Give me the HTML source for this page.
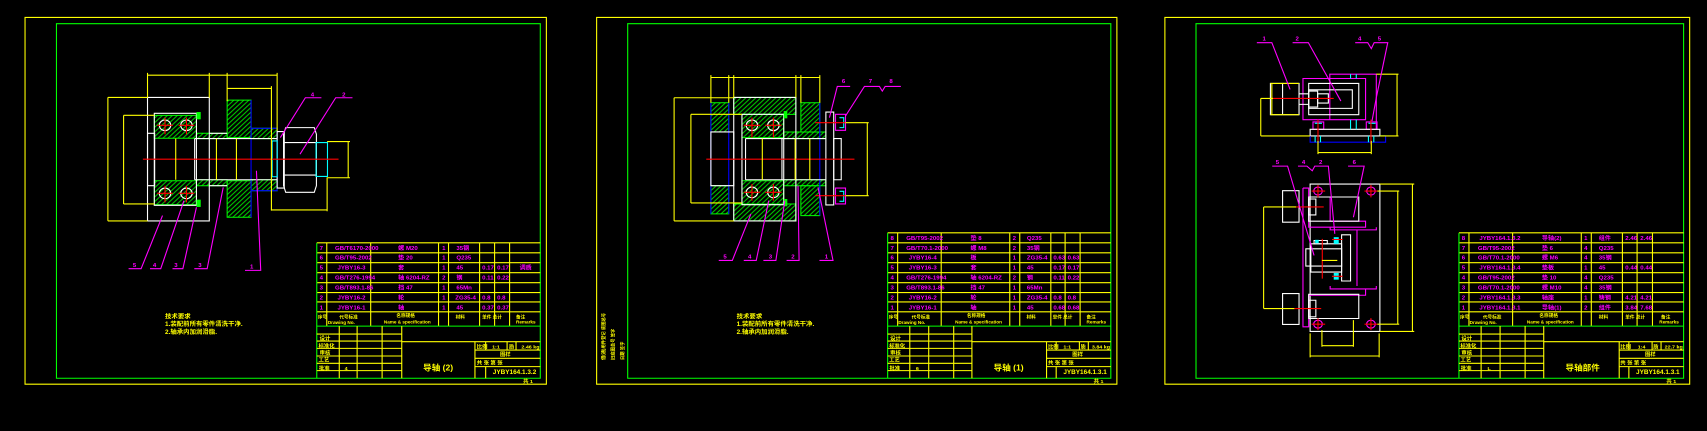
<!DOCTYPE html>
<html><head><meta charset="utf-8"><style>
html,body{margin:0;padding:0;background:#000;width:1707px;height:431px;overflow:hidden}
svg{display:block}
text{font-family:"Liberation Sans","Noto Sans CJK SC",sans-serif;font-weight:bold}
.y{stroke:#ffff00;fill:none}.g{stroke:#00ff00;fill:none}.w{stroke:#fff;fill:none}.m{stroke:#ff00ff;fill:none}.r{stroke:#ff0000;fill:none}.c{stroke:#00ffff;fill:none}.b{stroke:#0000ff;fill:none}
.y,.g,.w,.m,.r,.c,.b{stroke-width:1.1;vector-effect:non-scaling-stroke}
.h{fill:url(#hatch);stroke:#00ff00;stroke-width:1;vector-effect:non-scaling-stroke}
.tm{fill:#ff00ff;font-size:17px}.ty{fill:#ffff00;font-size:17px}
</style></head><body>
<svg width="1707" height="431" viewBox="0 0 1568 396" preserveAspectRatio="none" xmlns="http://www.w3.org/2000/svg">
<defs>
<pattern id="hatch" patternUnits="userSpaceOnUse" width="14" height="14"><path d="M0 14L14 0M-2 2L2 -2M12 16L16 12" stroke="#00cc00" stroke-width="3"/></pattern>
</defs>
<rect width="1568" height="396" fill="#000"/>

<!-- PANEL 1 -->
<g transform="translate(0.04,1.36) scale(0.328,0.305)">
<rect class="y" x="70" y="48" width="1460" height="1105"/>
<rect class="g" x="158" y="67" width="1355" height="1068"/>
<!-- table -->
<path class="y" d="M887 727H1513M887 757H1513M887 787H1513M887 817H1513M887 847H1513M887 877H1513M887 905H1513M887 935H1513M915 727V978M1038 727V978M1228 727V978M1256 727V978M1343 727V978M1385 727V978M1427 727V978"/>
<path class="g" d="M887 978H1513M887 727V1135"/>
<path class="y" d="M887 1002H1125M887 1023H1125M887 1045H1125M887 1068H1125M887 1090H1125M887 1112H1125M950 978V1135M1000 978V1135M1070 978V1135M1125 978V1135M1125 1025H1513M1330 1050H1513M1330 1075H1513M1330 1100H1513M1330 1025V1135M1360 1025V1050M1420 1025V1050M1445 1025V1050M1360 1100V1135"/>
<g class="tm"><text x="895" y="748">7</text><text x="938" y="748">GB/T6170-2000</text><text x="1115" y="748">螺 M20</text><text x="1238" y="748">1</text><text x="1278" y="748">35钢</text>
<text x="895" y="778">6</text><text x="938" y="778">GB/T95-2002</text><text x="1115" y="778">垫 20</text><text x="1238" y="778">1</text><text x="1278" y="778">Q235</text>
<text x="895" y="808">5</text><text x="945" y="808">JYBY16-3</text><text x="1115" y="808">套</text><text x="1238" y="808">1</text><text x="1278" y="808">45</text><text x="1350" y="808">0.17</text><text x="1392" y="808">0.17</text><text x="1455" y="808">调质</text>
<text x="895" y="838">4</text><text x="938" y="838">GB/T276-1994</text><text x="1115" y="838">轴 6204-RZ</text><text x="1238" y="838">2</text><text x="1278" y="838">钢</text><text x="1350" y="838">0.11</text><text x="1392" y="838">0.22</text>
<text x="895" y="868">3</text><text x="938" y="868">GB/T893.1-86</text><text x="1115" y="868">挡 47</text><text x="1238" y="868">1</text><text x="1278" y="868">65Mn</text>
<text x="895" y="898">2</text><text x="945" y="898">JYBY16-2</text><text x="1115" y="898">轮</text><text x="1238" y="898">1</text><text x="1275" y="898">ZG35-4</text><text x="1350" y="898">0.8</text><text x="1392" y="898">0.8</text>
<text x="895" y="928">1</text><text x="945" y="928">JYBY16-1</text><text x="1115" y="928">轴</text><text x="1238" y="928">1</text><text x="1278" y="928">45</text><text x="1350" y="928">0.37</text><text x="1392" y="928">0.37</text></g>
<g class="ty" style="font-size:13px"><text x="890" y="955">序号</text><text x="950" y="955">代号标准</text><text x="1110" y="950">名称规格</text><text x="1075" y="970">Name &amp; specification</text><text x="918" y="972">Drawing No.</text><text x="1276" y="955">材料</text><text x="1350" y="955">单件 总计</text><text x="1445" y="955">备注</text><text x="1445" y="970">Remarks</text></g>
<g class="ty" style="font-size:15px"><text x="895" y="1020">设计</text><text x="892" y="1042">标准化</text><text x="895" y="1063">审核</text><text x="892" y="1085">工艺</text><text x="893" y="1110">批准</text><text x="965" y="1110">4</text>
<text x="1335" y="1045">比例</text><text x="1378" y="1045">1:1</text><text x="1425" y="1045">质</text><text x="1460" y="1045">2.46 kg</text><text x="1400" y="1068">图样</text><text x="1335" y="1093">共 张 第 张</text>
<text x="1380" y="1122" style="font-size:18px">JYBY164.1.3.2</text><text x="1465" y="1150">共 1</text></g>
<text class="ty" x="1185" y="1112" style="font-size:24px">导轴 (2)</text>
<g class="ty" style="font-size:18px"><text x="462" y="955">技术要求</text><text x="462" y="978">1.装配前所有零件清洗干净.</text><text x="462" y="1002">2.轴承内加润滑脂.</text></g>
<!-- drawing -->
<rect class="h" x="636" y="297" width="67" height="113"/><rect class="h" x="636" y="540" width="67" height="110"/>
<rect class="h" x="703" y="382" width="73" height="31"/><rect class="h" x="703" y="537" width="73" height="33"/>
<rect class="h" x="550" y="397" width="86" height="16"/><rect class="h" x="550" y="537" width="86" height="18"/>
<rect class="h" x="432" y="343" width="118" height="69"/><rect class="h" x="432" y="540" width="118" height="72"/>
<path class="b" d="M703 297V650M703 382H776V570H703"/>
<rect class="w" x="413" y="289" width="173" height="372"/>
<rect class="w" x="432" y="337" width="118" height="277"/>
<rect class="w" x="413" y="397" width="20" height="158"/>
<path class="w" d="M545 413H776M545 537H776M545 413V537M586 397H636M586 555H636"/>
<circle class="w" cx="462" cy="373" r="16"/><circle class="w" cx="522" cy="373" r="16"/><circle class="w" cx="462" cy="578" r="16"/><circle class="w" cx="522" cy="578" r="16"/>
<rect x="550" y="333" width="12" height="22" fill="#00ff00"/><rect x="550" y="597" width="12" height="22" fill="#00ff00"/>
<rect class="w" x="776" y="392" width="20" height="170"/>
<path class="w" d="M800 380H880L886 400V555L880 575H800L794 555V400ZM797 425H885M797 523H885"/>
<rect class="c" x="885" y="425" width="32" height="102"/><rect class="c" x="762" y="420" width="14" height="108"/>
<path class="r" d="M400 475H948M462 350V400M440 373H484M522 350V400M500 373H544M462 555V605M440 578H484M522 555V605M500 578H544"/>
<path class="y" d="M413 222H776M413 215V290M586 215V290M636 215V300M776 215V390M636 262H760M760 255V630M302 289H413M302 661H413M302 289V661M346 343H432M346 610H432M346 343V610M975 422V531M916 422H980M916 531H980M760 628H916M916 530V632M492 413V537M606 413V537M662 413V537"/>
<path class="m" d="M360 805H395L455 645M420 805H450L515 600M483 805H512L550 620M544 805H580L625 560M686 810H730L718 510M785 410L855 290H900M840 460L940 290H987"/>
<g class="tm"><text x="372" y="800">5</text><text x="428" y="800">4</text><text x="488" y="800">3</text><text x="555" y="800">3</text><text x="700" y="805">1</text><text x="870" y="287">4</text><text x="958" y="287">2</text></g>
</g>

<!-- PANEL 2 -->
<g transform="translate(532.3,1.36) scale(0.328,0.305)">
<rect class="y" x="48" y="48" width="1457" height="1105"/>
<rect class="g" x="135" y="67" width="1353" height="1068"/>
<path class="y" d="M863 697H1488M863 727H1488M863 757H1488M863 787H1488M863 817H1488M863 847H1488M863 877H1488M863 905H1488M863 935H1488M891 697V978M1013 697V978M1205 697V978M1233 697V978M1320 697V978M1360 697V978M1402 697V978"/>
<path class="g" d="M863 978H1488M863 697V1135"/>
<path class="y" d="M863 1002H1099M863 1023H1099M863 1045H1099M863 1068H1099M863 1090H1099M863 1112H1099M925 978V1135M978 978V1135M1048 978V1135M1099 978V1135M1099 1025H1488M1308 1050H1488M1308 1075H1488M1308 1100H1488M1308 1025V1135M1335 1025V1050M1400 1025V1050M1425 1025V1050M1335 1100V1135"/>
<g class="tm"><text x="871" y="718">8</text><text x="915" y="718">GB/T95-2002</text><text x="1095" y="718">垫 8</text><text x="1213" y="718">2</text><text x="1253" y="718">Q235</text>
<text x="871" y="748">7</text><text x="915" y="748">GB/T70.1-2000</text><text x="1095" y="748">螺 M8</text><text x="1213" y="748">2</text><text x="1253" y="748">35钢</text>
<text x="871" y="778">6</text><text x="922" y="778">JYBY16-4</text><text x="1095" y="778">板</text><text x="1213" y="778">1</text><text x="1253" y="778">ZG35-4</text><text x="1327" y="778">0.63</text><text x="1367" y="778">0.63</text>
<text x="871" y="808">5</text><text x="922" y="808">JYBY16-3</text><text x="1095" y="808">套</text><text x="1213" y="808">1</text><text x="1253" y="808">45</text><text x="1327" y="808">0.17</text><text x="1367" y="808">0.17</text>
<text x="871" y="838">4</text><text x="915" y="838">GB/T276-1994</text><text x="1095" y="838">轴 6204-RZ</text><text x="1213" y="838">2</text><text x="1253" y="838">钢</text><text x="1327" y="838">0.11</text><text x="1367" y="838">0.22</text>
<text x="871" y="868">3</text><text x="915" y="868">GB/T893.1-86</text><text x="1095" y="868">挡 47</text><text x="1213" y="868">1</text><text x="1253" y="868">65Mn</text>
<text x="871" y="898">2</text><text x="922" y="898">JYBY16-2</text><text x="1095" y="898">轮</text><text x="1213" y="898">1</text><text x="1253" y="898">ZG35-4</text><text x="1327" y="898">0.8</text><text x="1367" y="898">0.8</text>
<text x="871" y="928">1</text><text x="922" y="928">JYBY16-1</text><text x="1095" y="928">轴</text><text x="1213" y="928">1</text><text x="1253" y="928">45</text><text x="1327" y="928">0.68</text><text x="1367" y="928">0.68</text></g>
<g class="ty" style="font-size:13px"><text x="866" y="955">序号</text><text x="930" y="955">代号标准</text><text x="1085" y="950">名称规格</text><text x="1052" y="970">Name &amp; specification</text><text x="893" y="972">Drawing No.</text><text x="1252" y="955">材料</text><text x="1325" y="955">单件 总计</text><text x="1420" y="955">备注</text><text x="1420" y="970">Remarks</text></g>
<g class="ty" style="font-size:15px"><text x="870" y="1020">设计</text><text x="867" y="1042">标准化</text><text x="870" y="1063">审核</text><text x="867" y="1085">工艺</text><text x="868" y="1110">批准</text><text x="942" y="1110">6</text>
<text x="1312" y="1045">比例</text><text x="1355" y="1045">1:1</text><text x="1403" y="1045">质</text><text x="1435" y="1045">3.84 kg</text><text x="1380" y="1068">图样</text><text x="1312" y="1093">共 张 第 张</text>
<text x="1355" y="1122" style="font-size:18px">JYBY164.1.3.1</text><text x="1440" y="1150">共 1</text></g>
<text class="ty" x="1160" y="1112" style="font-size:24px">导轴 (1)</text>
<g class="ty" style="font-size:18px"><text x="440" y="955">技术要求</text><text x="440" y="978">1.装配前所有零件清洗干净.</text><text x="440" y="1002">2.轴承内加润滑脂.</text></g>
<g class="ty" style="font-size:13px"><text transform="translate(72,1080) rotate(-90)">借(通)用件登记 底图总号</text><text transform="translate(98,1080) rotate(-90)">旧底图总号 签字</text><text transform="translate(124,1080) rotate(-90)">日期 签字</text></g>
<!-- drawing -->
<rect class="h" x="368" y="305" width="50" height="88"/><rect class="h" x="368" y="555" width="50" height="85"/>
<rect class="h" x="432" y="289" width="174" height="51"/><rect class="h" x="432" y="610" width="174" height="51"/>
<rect class="h" x="455" y="340" width="117" height="70"/><rect class="h" x="455" y="540" width="117" height="72"/>
<rect class="h" x="572" y="393" width="118" height="20"/><rect class="h" x="572" y="537" width="118" height="18"/>
<rect class="h" x="620" y="305" width="53" height="88"/><rect class="h" x="620" y="555" width="53" height="90"/>
<path class="b" d="M368 305V640M418 305V640M673 305V645"/>
<rect class="w" x="432" y="289" width="174" height="372"/>
<rect class="w" x="368" y="393" width="64" height="162"/>
<rect class="w" x="455" y="340" width="117" height="272"/>
<path class="w" d="M465 413H690M465 537H690M465 413V537M567 413V537"/>
<circle class="w" cx="483" cy="373" r="16"/><circle class="w" cx="543" cy="373" r="16"/><circle class="w" cx="483" cy="575" r="16"/><circle class="w" cx="543" cy="575" r="16"/>
<rect x="572" y="330" width="10" height="22" fill="#00ff00"/><rect x="572" y="595" width="10" height="22" fill="#00ff00"/>
<rect class="w" x="690" y="333" width="22" height="280"/><rect class="w" x="712" y="413" width="21" height="124"/>
<rect class="m" x="717" y="340" width="28" height="48"/><rect class="m" x="717" y="562" width="28" height="48"/>
<path class="c" d="M728 350H740V380H728M728 572H740V602H728"/>
<path class="r" d="M355 475H770M483 350V410M460 373H506M543 350V410M520 373H566M483 550V600M460 575H506M543 550V600M520 575H566M660 365H745M660 585H745"/>
<path class="y" d="M368 229H673M368 222V305M418 222V305M432 222V289M606 222V289M620 222V305M673 222V305M265 290H432M265 661H432M265 290V661M312 340H455M312 607H455M312 340V607M806 365V585M745 365H810M745 585H810M512 413V537M604 413V537M645 413V537"/>
<path class="m" d="M390 780H428L480 640M460 780H495L530 600M515 780H550L575 600M580 780H615L612 555M672 780H710L668 560M700 350L722 256H758M745 345L798 256H840L848 270L856 256H900"/>
<g class="tm"><text x="403" y="775">5</text><text x="472" y="775">4</text><text x="530" y="775">3</text><text x="593" y="775">2</text><text x="687" y="775">1</text><text x="735" y="245">6</text><text x="810" y="245">7</text><text x="868" y="245">8</text></g>
</g>

<!-- PANEL 3 -->
<g transform="translate(1055.9,1.36) scale(0.3286,0.305)">
<rect class="y" x="43" y="48" width="1467" height="1105"/>
<rect class="g" x="130" y="67" width="1363" height="1068"/>
<path class="y" d="M865 697H1493M865 727H1493M865 757H1493M865 787H1493M865 817H1493M865 847H1493M865 877H1493M865 905H1493M865 935H1493M893 697V978M1015 697V978M1207 697V978M1235 697V978M1322 697V978M1363 697V978M1406 697V978"/>
<path class="g" d="M865 978H1493M865 697V1135"/>
<path class="y" d="M865 1002H1102M865 1023H1102M865 1045H1102M865 1068H1102M865 1090H1102M865 1112H1102M927 978V1135M980 978V1135M1050 978V1135M1102 978V1135M1102 1025H1493M1313 1050H1493M1313 1075H1493M1313 1100H1493M1313 1025V1135M1340 1025V1050M1405 1025V1050M1430 1025V1050M1340 1100V1135"/>
<g class="tm"><text x="873" y="718">8</text><text x="922" y="718">JYBY164.1.3.2</text><text x="1097" y="718">导轴(2)</text><text x="1215" y="718">1</text><text x="1256" y="718">组件</text><text x="1330" y="718">2.46</text><text x="1372" y="718">2.46</text>
<text x="873" y="748">7</text><text x="918" y="748">GB/T95-2002</text><text x="1097" y="748">垫 6</text><text x="1215" y="748">4</text><text x="1256" y="748">Q235</text>
<text x="873" y="778">6</text><text x="918" y="778">GB/T70.1-2000</text><text x="1097" y="778">螺 M6</text><text x="1215" y="778">4</text><text x="1256" y="778">35钢</text>
<text x="873" y="808">5</text><text x="922" y="808">JYBY164.1.3.4</text><text x="1097" y="808">垫板</text><text x="1215" y="808">1</text><text x="1256" y="808">45</text><text x="1330" y="808">0.44</text><text x="1372" y="808">0.44</text>
<text x="873" y="838">4</text><text x="918" y="838">GB/T95-2002</text><text x="1097" y="838">垫 10</text><text x="1215" y="838">4</text><text x="1256" y="838">Q235</text>
<text x="873" y="868">3</text><text x="918" y="868">GB/T70.1-2000</text><text x="1097" y="868">螺 M10</text><text x="1215" y="868">4</text><text x="1256" y="868">35钢</text>
<text x="873" y="898">2</text><text x="922" y="898">JYBY164.1.3.3</text><text x="1097" y="898">轴座</text><text x="1215" y="898">1</text><text x="1256" y="898">铸钢</text><text x="1330" y="898">4.21</text><text x="1372" y="898">4.21</text>
<text x="873" y="928">1</text><text x="922" y="928">JYBY164.1.3.1</text><text x="1097" y="928">导轴(1)</text><text x="1215" y="928">2</text><text x="1256" y="928">组件</text><text x="1330" y="928">3.84</text><text x="1372" y="928">7.68</text></g>
<g class="ty" style="font-size:13px"><text x="868" y="955">序号</text><text x="932" y="955">代号标准</text><text x="1090" y="950">名称规格</text><text x="1055" y="970">Name &amp; specification</text><text x="895" y="972">Drawing No.</text><text x="1256" y="955">材料</text><text x="1330" y="955">单件 总计</text><text x="1430" y="955">备注</text><text x="1425" y="970">Remarks</text></g>
<g class="ty" style="font-size:15px"><text x="872" y="1020">设计</text><text x="869" y="1042">标准化</text><text x="872" y="1063">审核</text><text x="869" y="1085">工艺</text><text x="870" y="1110">批准</text><text x="945" y="1110">L</text>
<text x="1316" y="1045">比例</text><text x="1365" y="1045">1:4</text><text x="1408" y="1045">质</text><text x="1440" y="1045">22.7 kg</text><text x="1385" y="1068">图样</text><text x="1316" y="1093">共 张 第 张</text>
<text x="1360" y="1122" style="font-size:18px">JYBY164.1.3.1</text><text x="1445" y="1150">共 1</text></g>
<text class="ty" x="1163" y="1112" style="font-size:24px">导轴部件</text>
<!-- top view -->
<rect class="m" x="429" y="232" width="175" height="124"/>
<path class="m" d="M504 356V219H634V385M457 363H487V385H457ZM606 363H636V385H606Z"/>
<rect class="w" x="445" y="247" width="140" height="94"/><rect class="w" x="445" y="266" width="122" height="56"/>
<rect class="w" x="445" y="270" width="25" height="48"/><rect class="w" x="470" y="278" width="30" height="28"/>
<rect class="w" x="338" y="247" width="80" height="94"/><path class="w" d="M372 247V341M418 278H445M418 310H445"/>
<rect class="w" x="449" y="385" width="195" height="20"/>
<path class="b" d="M449 405V424H660V405"/>
<path class="c" d="M562 219V232M578 219V232M562 356V385M578 356V385M462 367H482M612 367H632M463 405V424M478 405V424M612 405V424M627 405V424M644 405H660"/>
<path class="r" d="M340 292H515M471 356V430M619 356V430"/>
<path class="y" d="M692 219V405M634 219H696M644 405H696M311 292V405M311 292H345M311 405H449M338 247H418M338 341H418M342 247V341M471 455H620M471 420V460M620 420V460"/>
<path class="m" d="M300 124H342L393 265M400 124H444L535 300M575 124H610L620 142L628 124H666L634 290L622 360"/>
<g class="tm"><text x="316" y="118">1</text><text x="408" y="118">2</text><text x="583" y="118">4</text><text x="638" y="118">5</text></g>
<!-- front view -->
<rect class="w" x="449" y="550" width="195" height="444"/>
<path class="m" d="M429 562H445V680H604V662H505V589M429 562V980H445V885H604V866H505M505 680V688H634V680M505 857V866H634V857M580 688V857"/>
<rect class="w" x="372" y="570" width="46" height="95"/><rect class="w" x="372" y="880" width="46" height="93"/>
<rect class="w" x="445" y="589" width="140" height="73"/><rect class="w" x="445" y="882" width="140" height="73"/>
<rect class="w" x="445" y="595" width="20" height="48"/><rect class="w" x="445" y="900" width="20" height="50"/>
<rect class="w" x="437" y="745" width="100" height="52"/><rect class="w" x="451" y="730" width="86" height="85"/>
<rect class="w" x="537" y="703" width="25" height="139"/><rect class="w" x="460" y="720" width="37" height="10"/>
<rect x="515" y="710" width="14" height="20" fill="#00ffff"/><rect x="515" y="818" width="14" height="20" fill="#00ffff"/><rect x="463" y="718" width="10" height="10" fill="#00ffff"/>
<circle class="m" cx="471" cy="571" r="12"/><circle class="m" cx="619" cy="571" r="12"/><circle class="m" cx="471" cy="972" r="12"/><circle class="m" cx="619" cy="972" r="12"/>
<path class="r" d="M453 571H491M471 553V590M601 571H637M619 553V590M453 972H491M471 954V990M601 972H637M619 954V990M410 619H487M405 925H480M483 715V835M510 717H540M510 828H540"/>
<path class="y" d="M735 550V994M644 550H740M644 994H740M694 571V972M637 571H698M637 972H698M319 619V925M319 619H410M319 925H405M449 1068H642M449 1000V1072M642 1000V1072M482 1037H570M482 990V1040M570 960V1040M482 780H525"/>
<path class="m" d="M343 496H386L460 765M415 496H440L455 510L462 496H500L518 700M555 496H600L570 650"/>
<g class="tm"><text x="353" y="490">5</text><text x="426" y="490">4</text><text x="474" y="490">2</text><text x="568" y="490">6</text></g>
</g>
</svg>
</body></html>
